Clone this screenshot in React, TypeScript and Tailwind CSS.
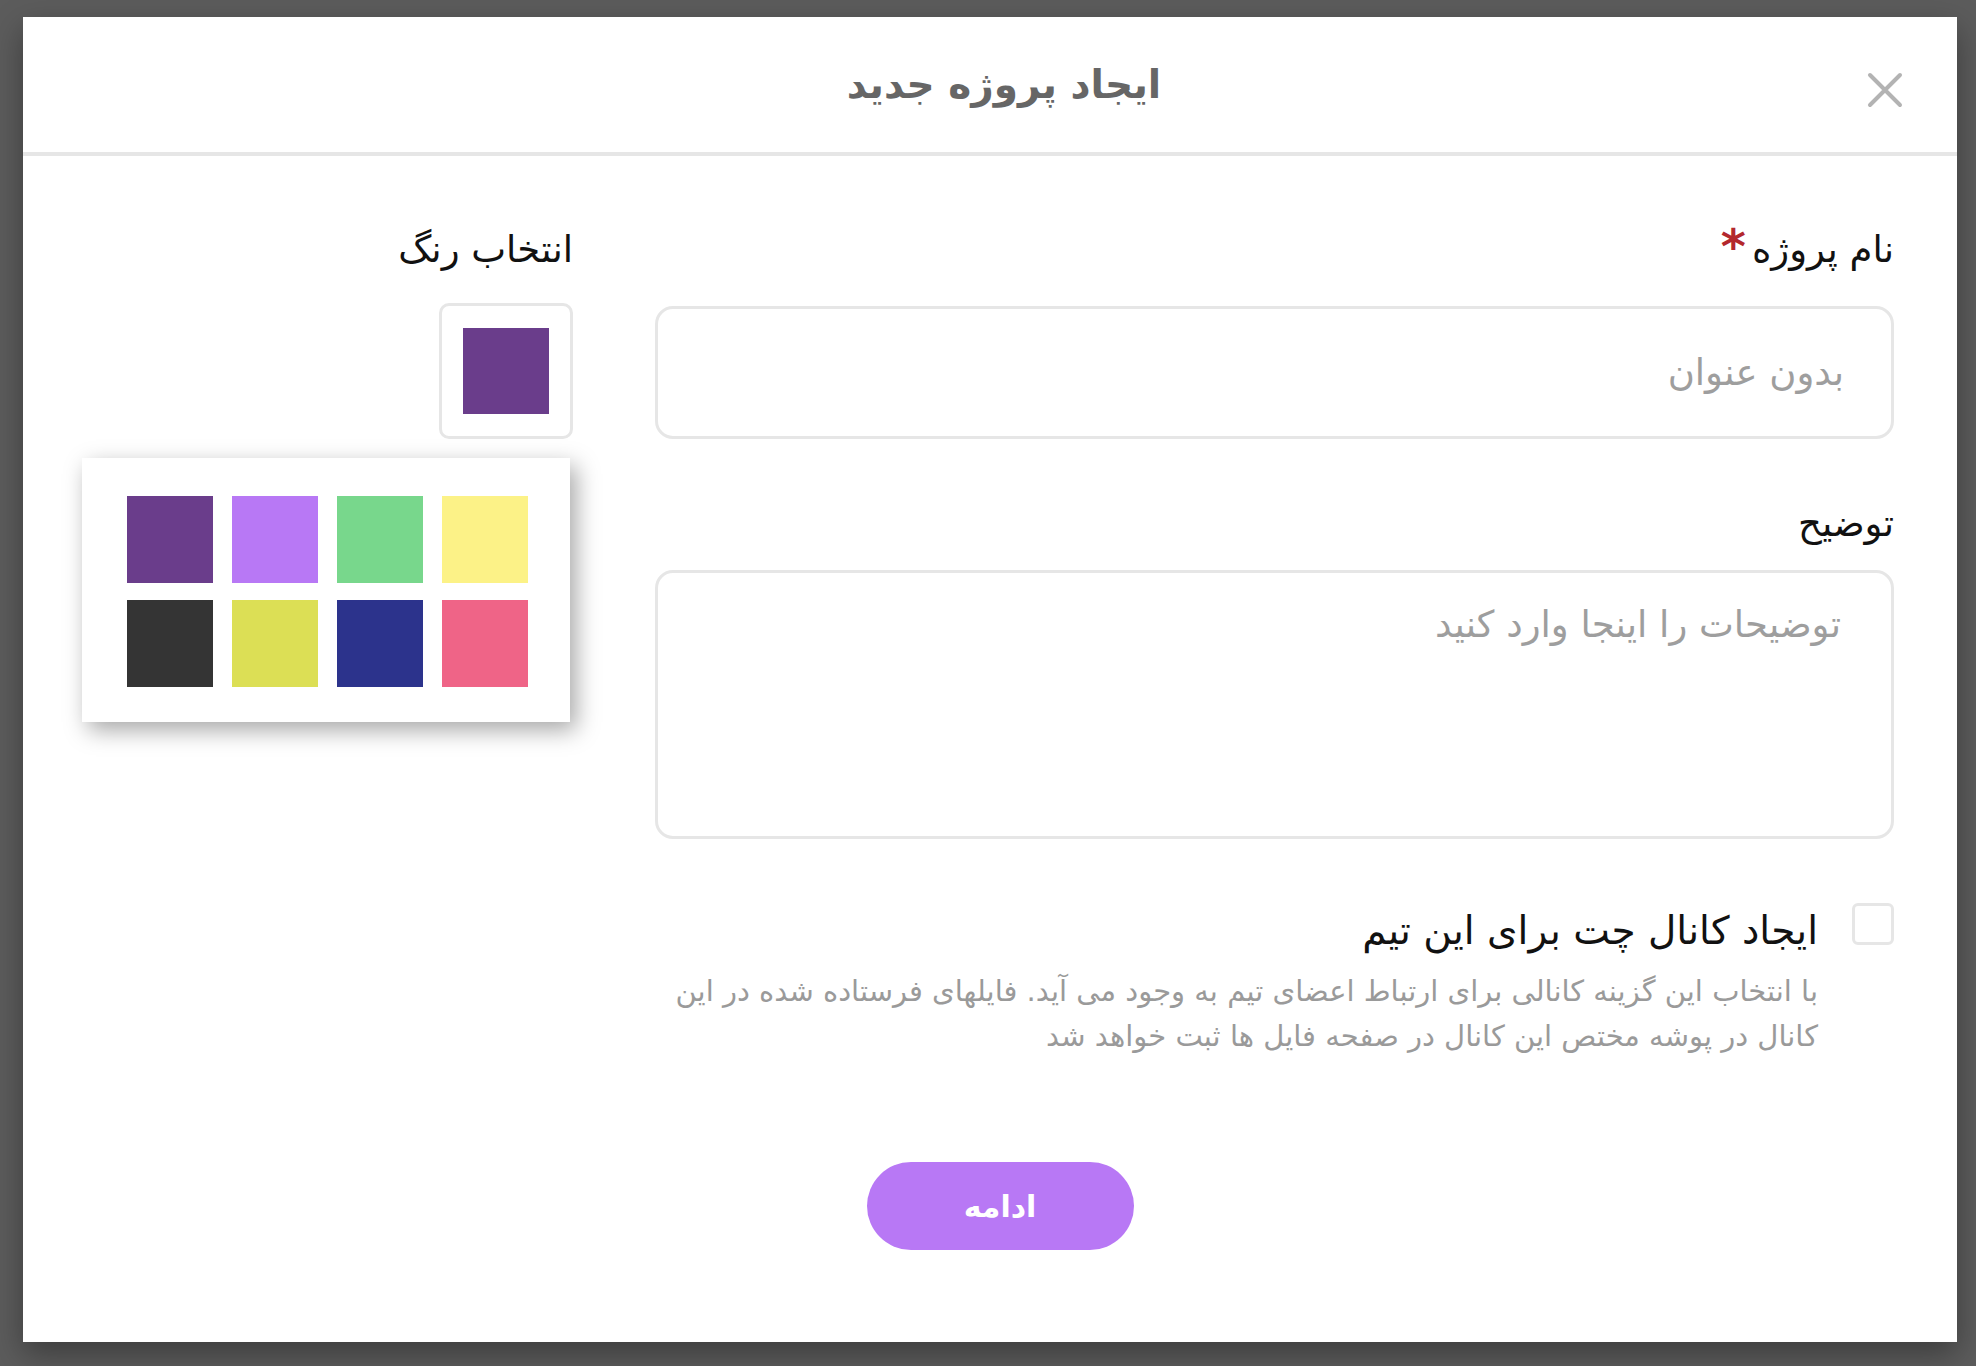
import React from "react";

const COLORS = ["#6a3d8b", "#b878f5", "#78d78c", "#fcf287", "#343434", "#dcdf55", "#2c338c", "#ef6487"];

export default function App() {
  return (
    <div className="w-[1976px] h-[1366px] overflow-hidden bg-[#5c5c5c] pt-[17px] pl-[23px] pr-[19px] font-['DejaVu_Sans',sans-serif]">
      <div dir="rtl" className="h-[1325px] bg-white shadow-[0_12px_30px_rgba(0,0,0,0.35)] flex flex-col">
        {/* header */}
        <div className="relative h-[139px] shrink-0 border-b-4 border-[#e6e6e6] flex items-center justify-center pl-[28px]">
          <h1 className="text-[39px] font-bold text-[#666666] leading-none">ایجاد پروژه جدید</h1>
          <button className="absolute right-[54px] top-[55px] w-[36px] h-[36px]">
            <svg viewBox="0 0 36 36" width="36" height="36">
              <path d="M3 3 L33 33 M33 3 L3 33" stroke="#b3b3b3" strokeWidth="4" strokeLinecap="round" fill="none" />
            </svg>
          </button>
        </div>

        {/* body */}
        <div className="flex gap-[82px] pr-[63px] pt-[70px]">
          {/* form column */}
          <div className="w-[1239px] shrink-0 flex flex-col">
            <label className="flex items-start gap-[6px] text-[37px] leading-[48px] text-[#111]">
              <span>نام پروژه</span>
              <span className="text-[#b3282d] text-[48px] leading-[40px] font-bold">*</span>
            </label>
            <div className="mt-[32px] h-[133px] rounded-[18px] border-[3px] border-[#e6e6e6] flex items-center pr-[47px]">
              <span className="text-[37px] text-[#9e9e9e]">بدون عنوان</span>
            </div>

            <label className="mt-[61px] text-[37px] leading-[48px] text-[#111]">توضیح</label>
            <div className="mt-[22px] h-[269px] rounded-[18px] border-[3px] border-[#e6e6e6] pr-[50px] pt-[24px]">
              <span className="text-[37px] text-[#9e9e9e]">توضیحات را اینجا وارد کنید</span>
            </div>

            <div className="mt-[64px] flex items-start gap-[34px]">
              <div className="w-[42px] h-[42px] shrink-0 rounded-[6px] border-[3px] border-[#e6e6e6]" />
              <div className="flex flex-col">
                <span className="text-[39px] leading-[52px] text-[#111] mt-[2px]">ایجاد کانال چت برای این تیم</span>
                <p className="mt-[12px] text-[29px] leading-[45px] text-[#9a9a9a] max-w-[1161px]">
                  با انتخاب این گزینه کانالی برای ارتباط اعضای تیم به وجود می آید. فایلهای فرستاده شده در این کانال در پوشه مختص این کانال در صفحه فایل ها ثبت خواهد شد
                </p>
              </div>
            </div>
          </div>

          {/* color column */}
          <div className="w-[185px] shrink-0 flex flex-col items-start">
            <span className="text-[37px] leading-[48px] text-[#111]">انتخاب رنگ</span>
            <div className="relative mt-[29px]">
              <div className="w-[134px] h-[136px] rounded-[10px] border-[3px] border-[#e6e6e6] flex items-center justify-center">
                <div className="w-[86px] h-[86px] bg-[#6a3d8b]" />
              </div>
              <div
                dir="ltr"
                className="absolute right-[3px] top-[155px] w-[488px] h-[264px] bg-white shadow-[6px_8px_22px_rgba(0,0,0,0.35)] pl-[45px] pt-[38px]"
              >
                <div className="grid grid-cols-[86px_86px_86px_86px] gap-x-[19px] gap-y-[17px]">
                  {COLORS.map((c) => (
                    <div key={c} className="w-[86px] h-[87px]" style={{ backgroundColor: c }} />
                  ))}
                </div>
              </div>
            </div>
          </div>
        </div>

        {/* footer button */}
        <div className="mt-auto mb-[92px] flex justify-center pl-[20px]">
          <button className="w-[267px] h-[88px] rounded-full bg-[#b878f5] text-white text-[30px] font-bold">ادامه</button>
        </div>
      </div>
    </div>
  );
}
